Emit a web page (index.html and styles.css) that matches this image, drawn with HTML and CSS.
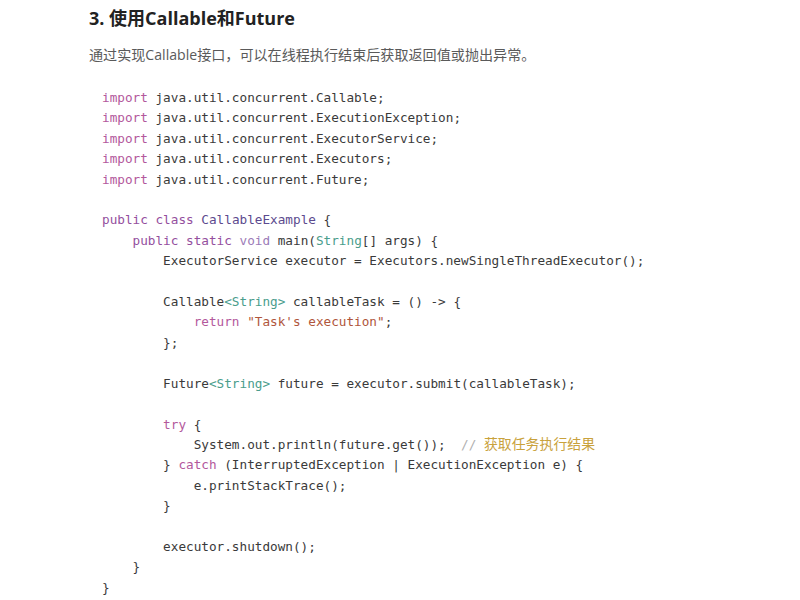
FILE: index.html
```html
<!DOCTYPE html>
<html lang="zh-CN">
<head>
<meta charset="utf-8">
<link rel="stylesheet" href="styles.css">
</head>
<body>
<div class="article">
<h3 class="title">3. 使用Callable和Future</h3>
<p class="desc">通过实现Callable接口，可以在线程执行结束后获取返回值或抛出异常。</p>
<pre class="code"><span class="kw">import</span> java.util.concurrent.Callable;
<span class="kw">import</span> java.util.concurrent.ExecutionException;
<span class="kw">import</span> java.util.concurrent.ExecutorService;
<span class="kw">import</span> java.util.concurrent.Executors;
<span class="kw">import</span> java.util.concurrent.Future;

<span class="kw2">public</span> <span class="kw2">class</span> <span class="cls">CallableExample</span> {
    <span class="kw2">public</span> <span class="kw2">static</span> <span class="ty">void</span> main(<span class="gen">String</span>[] args) {
        ExecutorService executor = Executors.newSingleThreadExecutor();

        Callable<span class="gen">&lt;String&gt;</span> callableTask = () -&gt; {
            <span class="kw">return</span> <span class="str">"Task's execution"</span>;
        };

        Future<span class="gen">&lt;String&gt;</span> future = executor.submit(callableTask);

        <span class="kw">try</span> {
            System.out.println(future.get());  <span class="cm">//</span> <span class="cmz">获取任务执行结果</span>
        } <span class="kw">catch</span> (InterruptedException | ExecutionException e) {
            e.printStackTrace();
        }

        executor.shutdown();
    }
}</pre>
</div>
</body>
</html>
```

FILE: styles.css
```css
html, body {
  margin: 0;
  padding: 0;
  background: #ffffff;
}

.article {
  padding: 6px 0 0 89px;
}

.title {
  margin: 0;
  font-family: "Open Sans", "Noto Sans CJK SC", sans-serif;
  font-weight: 700;
  font-size: 18px;
  line-height: 24px;
  color: #222222;
}

.desc {
  margin: 15px 0 0 0;
  font-family: "Open Sans", "Noto Sans CJK SC", sans-serif;
  font-size: 14.1px;
  line-height: 20px;
  color: #5a5a5a;
}

.code {
  margin: 23px 0 0 0;
  padding-left: 13px;
  font-family: "DejaVu Sans Mono", "Noto Sans CJK SC", monospace;
  font-size: 12.7px;
  line-height: 20.4px;
  color: #3a3a3a;
}

.kw { color: #b3589c; }
.kw2 { color: #944f9e; }
.ty { color: #9c7bb8; }
.cls { color: #5c4a8e; }
.gen { color: #4a9d8c; }
.str { color: #b0563c; }
.cm { color: #b0b0b0; }
.cmz { color: #c9a23c; font-size: 13.9px; line-height: 0; font-family: "Noto Sans CJK SC", sans-serif; }
```
